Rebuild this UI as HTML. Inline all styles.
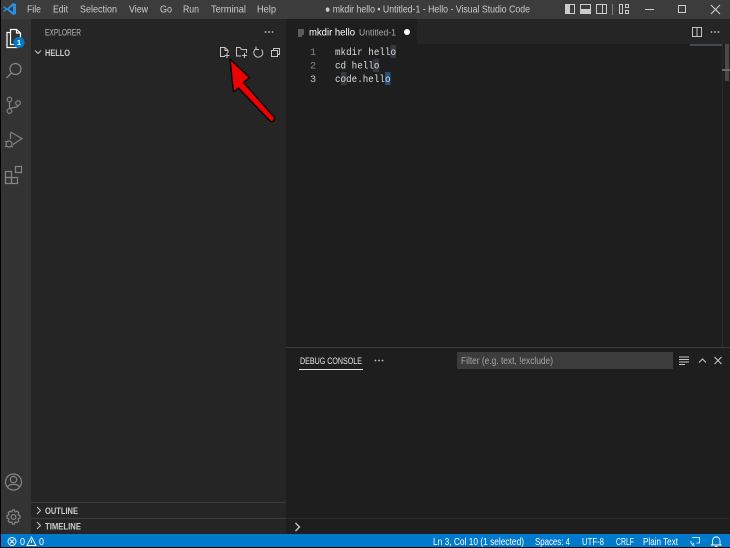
<!DOCTYPE html>
<html><head><meta charset="utf-8"><style>
html,body{margin:0;padding:0;background:#000;width:730px;height:548px;overflow:hidden}
svg{display:block}
text{font-family:"Liberation Sans",sans-serif}
.m{font-family:"Liberation Mono",monospace;font-size:10.2px;fill:#dcdcdc}
.i{fill:none;stroke:#858585;stroke-width:1.2}
.s{fill:none;stroke:#c5c5c5;stroke-width:1}
</style></head><body>
<svg width="730" height="548" viewBox="0 0 730 548" xmlns="http://www.w3.org/2000/svg">
<rect width="730" height="548" fill="#000"/>
<!-- title bar -->
<rect x="1" y="0" width="729" height="19" fill="#3c3c3c"/>
<path d="M13 3 L7 8.500 L4.500 6.500 L3 7.300 L5.500 9 L3 11 L4.500 11.800 L7 9.800 L13 15 L16 14 V4 Z M13 6 V12 L9 9 Z" fill="#2a8fdc" fill-rule="evenodd"/>
<g font-size="10.500" fill="#cccccc">
<text x="27" y="12.500" textLength="14" lengthAdjust="spacingAndGlyphs">File</text>
<text x="53" y="12.500" textLength="15" lengthAdjust="spacingAndGlyphs">Edit</text>
<text x="80" y="12.500" textLength="37" lengthAdjust="spacingAndGlyphs">Selection</text>
<text x="129" y="12.500" textLength="19" lengthAdjust="spacingAndGlyphs">View</text>
<text x="160" y="12.500" textLength="12" lengthAdjust="spacingAndGlyphs">Go</text>
<text x="183" y="12.500" textLength="16" lengthAdjust="spacingAndGlyphs">Run</text>
<text x="211" y="12.500" textLength="35" lengthAdjust="spacingAndGlyphs">Terminal</text>
<text x="257" y="12.500" textLength="19" lengthAdjust="spacingAndGlyphs">Help</text>
<text x="325" y="12.500" textLength="205" lengthAdjust="spacingAndGlyphs">● mkdir hello • Untitled-1 - Hello - Visual Studio Code</text>
</g>
<!-- layout toggles -->
<g fill="none" stroke="#cccccc" stroke-width="1">
<rect x="565.500" y="4.500" width="9" height="9"/><rect x="565.500" y="4.500" width="4" height="9" fill="#cccccc"/>
<rect x="580.500" y="4.500" width="10" height="9"/><rect x="580.500" y="9.500" width="10" height="4" fill="#cccccc"/>
<rect x="596.500" y="4.500" width="10" height="9"/><path d="M602.500 4.500V13.500"/>
<path d="M612.500 4V15" stroke="#777"/>
<rect x="619.500" y="4.500" width="3" height="9"/><rect x="625.500" y="4.500" width="3" height="3"/><rect x="625.500" y="10.500" width="3" height="3"/>
<path d="M645 9.500H654"/>
<rect x="678.500" y="5.500" width="7" height="7"/>
<path d="M711 5L720 14M720 5L711 14" stroke-width="1.100"/>
</g>
<!-- activity bar -->
<rect x="1" y="19" width="30" height="515" fill="#333333"/>
<path d="M10.500 29.500H16.500L20.500 33V44.500H10.500ZM10.500 32.500H7V47.500H17V44.500M16.500 29.500V33H20.500" fill="none" stroke="#ffffff" stroke-width="1.200"/>
<circle cx="19" cy="42.500" r="5.500" fill="#007acc"/>
<text x="19" y="45.200" font-size="7.500" font-weight="bold" fill="#fff" text-anchor="middle">1</text>
<g class="i">
<circle cx="15.500" cy="69" r="5.500"/><path d="M11.500 73L6.500 78" stroke-width="1.400"/>
<circle cx="9.500" cy="99.500" r="2.300"/><circle cx="18" cy="103" r="2.300"/><circle cx="9.500" cy="111" r="2.300"/><path d="M9.500 102V108.500M18 105.500C18 108 11 107 9.500 109"/>
<path d="M10.500 133V139M10.500 132L22 138.500L13 144.500"/>
<circle cx="9" cy="144" r="3"/><path d="M5 141l2 1M5 147l2-1M13 147l-2-1"/>
<rect x="5.500" y="171.500" width="6" height="6"/><rect x="5.500" y="177.500" width="6" height="6"/><rect x="11.500" y="177.500" width="6" height="6"/><rect x="15.500" y="166.500" width="6" height="6"/>
<circle cx="13.500" cy="482" r="8"/><circle cx="13.500" cy="479.500" r="3.200"/><path d="M7.500 487C9 483.500 18 483.500 19.500 487"/>
<circle cx="13.500" cy="517" r="2.400"/>
<path d="M11.800 510L12.500 508H14.500L15.200 510L17.200 509.200L18.800 510.800L18 512.800L20 513.600V516L18 517L18.800 519L17.200 520.600L15.200 520L14.500 522H12.500L11.800 520L9.800 520.600L8.200 519L9 517L7 516V513.600L9 512.800L8.200 510.800L9.800 509.200Z" transform="translate(0,2)"/>
</g>
<!-- sidebar -->
<rect x="31" y="19" width="255" height="515" fill="#252526"/>
<text x="45" y="35.500" font-size="9" fill="#bbbbbb" textLength="36" lengthAdjust="spacingAndGlyphs">EXPLORER</text>
<g fill="#c5c5c5"><circle cx="265.500" cy="32" r=".9"/><circle cx="269" cy="32" r=".9"/><circle cx="272.500" cy="32" r=".9"/></g>
<path d="M35 50.500L38 53.500L41 50.500" fill="none" stroke="#c5c5c5" stroke-width="1"/>
<text x="45" y="56" font-size="9" font-weight="bold" fill="#cccccc" textLength="25" lengthAdjust="spacingAndGlyphs">HELLO</text>
<g class="s">
<path d="M225 56.500H220.500V47.500H225L228 50.500V53M225 47.500V50.500H228M224.500 55.500H229.500M227 53V58"/>
<path d="M241 56H236.500V47.500H240L241.500 49.500H246.500V53M242 55.500H247M244.500 53V58"/>
<path d="M261.500 49.500A4.500 4.500 0 1 1 256.500 48.500M256 46.500V49.500H259"/>
<rect x="271.500" y="50.500" width="6" height="6"/><path d="M273.500 50.500V48.500H279.500V54.500H277.500"/>
</g>
<!-- sidebar lower sections -->
<rect x="31" y="502" width="255" height="1" fill="#3c3c3c"/>
<rect x="31" y="518" width="255" height="1" fill="#3c3c3c"/>
<path d="M37 507L40.500 510.500L37 514M37 522L40.500 525.500L37 529" fill="none" stroke="#c5c5c5" stroke-width="1"/>
<text x="45" y="514" font-size="9" font-weight="bold" fill="#cccccc" textLength="33" lengthAdjust="spacingAndGlyphs">OUTLINE</text>
<text x="45" y="529.500" font-size="9" font-weight="bold" fill="#cccccc" textLength="36" lengthAdjust="spacingAndGlyphs">TIMELINE</text>
<!-- editor -->
<rect x="286" y="19" width="444" height="515" fill="#1e1e1e"/>
<rect x="286" y="19" width="444" height="25" fill="#252526"/>
<rect x="286" y="19" width="131" height="25" fill="#1e1e1e"/>
<path d="M298 30H304M298 32H304M298 34H304M298 36H302" stroke="#c5c5c5" stroke-width=".8"/>
<text x="309" y="35.500" font-size="10.500" fill="#ffffff" textLength="46" lengthAdjust="spacingAndGlyphs">mkdir hello</text>
<text x="359" y="35.500" font-size="9.500" fill="#a8a8a8" textLength="37" lengthAdjust="spacingAndGlyphs">Untitled-1</text>
<circle cx="407" cy="32" r="3" fill="#ffffff"/>
<g fill="none" stroke="#c5c5c5"><rect x="692.500" y="27.500" width="9" height="9"/><path d="M697 27.500V36.500"/></g>
<g fill="#c5c5c5"><circle cx="711.500" cy="32" r=".9"/><circle cx="715" cy="32" r=".9"/><circle cx="718.500" cy="32" r=".9"/></g>
<!-- code -->
<rect x="390.500" y="45" width="5.500" height="13" fill="#343a40"/>
<rect x="373" y="59" width="6" height="13" fill="#343a40"/>
<rect x="341" y="72" width="5.500" height="13" fill="#343a40"/>
<rect x="385" y="72" width="5.500" height="13" fill="#264f78"/>
<text class="m" x="310" y="55" style="fill:#858585">1</text>
<text class="m" x="310" y="68.500" style="fill:#858585">2</text>
<text class="m" x="310" y="82" style="fill:#c6c6c6">3</text>
<text class="m" x="335" y="55" textLength="61" lengthAdjust="spacingAndGlyphs">mkdir hello</text>
<text class="m" x="335" y="68.500" textLength="44.400" lengthAdjust="spacingAndGlyphs">cd hello</text>
<text class="m" x="335" y="82" textLength="55.500" lengthAdjust="spacingAndGlyphs">code.hello</text>
<!-- scrollbar -->
<rect x="690" y="44" width="32" height="2" fill="#3f4a55"/>
<rect x="722" y="44" width="1" height="303" fill="#2b2b2b"/>
<rect x="725" y="44" width="4" height="37" fill="#4a4a4a"/>
<rect x="722" y="69" width="8" height="2" fill="#6a6a6a"/>
<!-- panel -->
<rect x="286" y="347" width="444" height="1" fill="#3c3c3c"/>
<text x="300" y="364" font-size="9.300" fill="#e7e7e7" textLength="62" lengthAdjust="spacingAndGlyphs">DEBUG CONSOLE</text>
<rect x="299" y="369" width="64" height="1" fill="#e7e7e7"/>
<g fill="#c5c5c5"><circle cx="375.500" cy="360.500" r=".9"/><circle cx="379" cy="360.500" r=".9"/><circle cx="382.500" cy="360.500" r=".9"/></g>
<rect x="457" y="352" width="216" height="17" fill="#3c3c3c"/>
<text x="461" y="364" font-size="10" fill="#a6a6a6" textLength="92" lengthAdjust="spacingAndGlyphs">Filter (e.g. text, !exclude)</text>
<path d="M679 357H689M679 359.500H689M679 362H689M679 364.500H685" stroke="#c5c5c5" stroke-width="1"/>
<path d="M699 362.500L702.500 359L706 362.500M714.500 357L721.500 364M721.500 357L714.500 364" fill="none" stroke="#c5c5c5" stroke-width="1.100"/>
<rect x="286" y="519" width="444" height="15" fill="#1e1e1e"/>
<rect x="286" y="518" width="444" height="1" fill="#2a2a2a"/>
<path d="M295.500 523L299.500 527L295.500 531" fill="none" stroke="#cccccc" stroke-width="1.300"/>
<!-- status bar -->
<rect x="1" y="534" width="729" height="13" fill="#007acc"/>
<g fill="none" stroke="#fff" stroke-width=".9">
<circle cx="12" cy="541.500" r="4"/><path d="M10 539.500L14 543.500M14 539.500L10 543.500"/>
<path d="M31.500 537L36 545.500H27Z"/><path d="M31.500 540V543"/>
<path d="M692 537.500H699.500V543H696.500M694 543L692 545.500M691 541V543L694.500 546" stroke-width=".8"/>
<path d="M712.500 544V541C712.500 535.500 720 535.500 720 541V544L721 545H711.500ZM715 546.500H717.500"/>
</g>
<g font-size="9.800" fill="#ffffff">
<text x="20" y="545" textLength="5" lengthAdjust="spacingAndGlyphs">0</text>
<text x="39" y="545" textLength="5" lengthAdjust="spacingAndGlyphs">0</text>
<text x="433" y="545" textLength="91" lengthAdjust="spacingAndGlyphs">Ln 3, Col 10 (1 selected)</text>
<text x="535" y="545" textLength="35" lengthAdjust="spacingAndGlyphs">Spaces: 4</text>
<text x="582" y="545" textLength="22" lengthAdjust="spacingAndGlyphs">UTF-8</text>
<text x="616" y="545" textLength="18" lengthAdjust="spacingAndGlyphs">CRLF</text>
<text x="643" y="545" textLength="35" lengthAdjust="spacingAndGlyphs">Plain Text</text>
</g>
<!-- red arrow -->
<path d="M230 59L249.500 77.500L243.500 82.500L274.500 117.500Q275 122 270.500 121.500L238.500 88L233.500 92Z" fill="#ee0000" stroke="#000" stroke-width="1.300" stroke-linejoin="round"/>
</svg>
</body></html>
